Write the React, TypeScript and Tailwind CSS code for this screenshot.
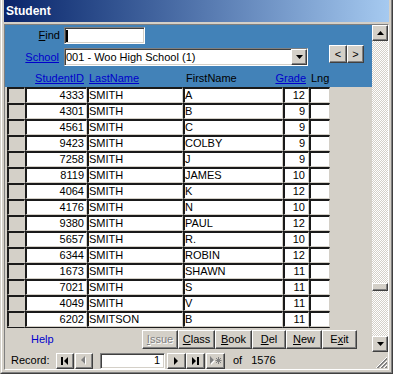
import type { ReactNode } from "react";

const rows: [string, string, string, string][] = [
  ["4333", "SMITH", "A", "12"],
  ["4301", "SMITH", "B", "9"],
  ["4561", "SMITH", "C", "9"],
  ["9423", "SMITH", "COLBY", "9"],
  ["7258", "SMITH", "J", "9"],
  ["8119", "SMITH", "JAMES", "10"],
  ["4064", "SMITH", "K", "12"],
  ["4176", "SMITH", "N", "10"],
  ["9380", "SMITH", "PAUL", "12"],
  ["5657", "SMITH", "R.", "10"],
  ["6344", "SMITH", "ROBIN", "12"],
  ["1673", "SMITH", "SHAWN", "11"],
  ["7021", "SMITH", "S", "11"],
  ["4049", "SMITH", "V", "11"],
  ["6202", "SMITSON", "B", "11"],
  ["", "", "", ""],
];

const sunken =
  "border border-t-[#808080] border-l-[#808080] border-r-white border-b-white shadow-[inset_1px_1px_0_#404040,inset_-1px_-1px_0_#d4d0c8]";
const raised =
  "bg-[#d4d0c8] border border-t-white border-l-white border-r-[#404040] border-b-[#404040] shadow-[inset_-1px_-1px_0_#808080]";
const cell =
  "h-[16px] shrink-0 border-t-2 border-l-2 border-r border-b border-t-[#1a1a1a] border-l-[#1a1a1a] border-r-[#d4d0c8] border-b-[#d4d0c8] flex items-center whitespace-nowrap overflow-hidden";
const link = "text-[#0000cc] underline underline-offset-1";

function Arrow({ dir }: { dir: "up" | "down" }) {
  return (
    <svg width="7" height="4" viewBox="0 0 7 4">
      <polygon points={dir === "up" ? "3.5,0 7,4 0,4" : "0,0 7,0 3.5,4"} fill="#000" />
    </svg>
  );
}

function FormButton({ w, children, disabled }: { w: string; children: ReactNode; disabled?: boolean }) {
  return (
    <div
      className={`${w} h-[19px] ${raised} flex items-center justify-center ${
        disabled ? "text-[#808080] [text-shadow:1px_1px_0_#fff]" : ""
      }`}
    >
      {children}
    </div>
  );
}

function NavButton({ w, children }: { w: string; children: ReactNode }) {
  return <div className={`${w} h-[16px] ${raised} flex items-center justify-center`}>{children}</div>;
}

export default function App() {
  return (
    <div className="w-[393px] h-[374px] bg-[#d4d0c8] border-l border-r border-b border-l-[#d4d0c8] border-r-[#404040] border-b-[#404040] overflow-hidden text-[11px] leading-none text-black [font-family:'Liberation_Sans',Arial,sans-serif]">
      <div className="h-full border-l border-r border-b border-l-white border-r-[#808080] border-b-[#808080] px-[2px] pb-[2px] flex flex-col">
        <div className="h-[22px] shrink-0 bg-linear-to-r from-[#0a246a] to-[#a6caf0] flex items-center pl-[2px] text-white font-bold text-[12px]">
          Student
        </div>
        <div className="h-[2px] shrink-0" />

        <div className="flex-1 flex flex-col border border-t-[#808080] border-l-[#808080] border-r-white border-b-white">
          <div className="h-[327px] flex">
            {/* form */}
            <div className="w-[367px] flex flex-col">
              <div className="h-[62px] shrink-0 bg-[#4282b8] flex flex-col pt-[2px]">
                <div className="flex h-[17px]">
                  <div className="w-[59px] pr-[4px] flex items-center justify-end">
                    <span>
                      <u>F</u>ind
                    </span>
                  </div>
                  <div className={`w-[81px] h-[17px] bg-white ${sunken} flex items-center pl-[1px]`}>
                    <div className="w-[2px] h-[12px] bg-black" />
                  </div>
                </div>
                <div className="flex h-[21px] mt-[1px]">
                  <div className="w-[59px] pr-[5px] pt-[3px] flex items-center justify-end">
                    <span className={link}>School</span>
                  </div>
                  <div className={`mt-[3px] w-[244px] h-[18px] bg-white ${sunken} flex items-center`}>
                    <span className="flex-1 pl-[1px]">001 - Woo High School (1)</span>
                    <div className={`w-[16px] h-full ${raised} flex items-center justify-center`}>
                      <Arrow dir="down" />
                    </div>
                  </div>
                  <div className="ml-[21px] flex h-[18px]">
                    <div className={`w-[18px] h-full ${raised} flex items-center justify-center`}>&lt;</div>
                    <div className={`w-[17px] h-full ${raised} flex items-center justify-center`}>&gt;</div>
                  </div>
                </div>
                <div className="flex h-[21px] items-center pt-[3px] pl-[2px] whitespace-nowrap">
                  <div className="w-[18px]" />
                  <div className="w-[62px] text-right pr-[3px]">
                    <span className={link}>StudentID</span>
                  </div>
                  <div className="w-[96px] pl-[2px]">
                    <span className={link}>LastName</span>
                  </div>
                  <div className="w-[92px] pl-[3px]">FirstName</div>
                  <div className="w-[34px] text-right pr-[3px]">
                    <span className={link}>Grade</span>
                  </div>
                  <div className="pl-[2px]">Lng</div>
                </div>
              </div>

              <div className="h-[241px] shrink-0 overflow-hidden flex flex-col">
                {rows.map(([id, last, first, grade], i) => (
                  <div key={i} className="flex pl-[2px] shrink-0">
                    <div className={`${cell} w-[18px] bg-[#d4d0c8]`} />
                    <div className={`${cell} w-[62px] bg-white justify-end pr-[2px]`}>{id}</div>
                    <div className={`${cell} w-[96px] bg-white`}>{last}</div>
                    <div className={`${cell} w-[100px] bg-white`}>{first}</div>
                    <div className={`${cell} w-[26px] bg-white justify-end pr-[3px]`}>{grade}</div>
                    <div className={`${cell} w-[21px] bg-white`} />
                  </div>
                ))}
              </div>

              <div className="flex-1 flex items-start pt-[2px]">
                <div className="w-[137px] h-[19px] pl-[26px] flex items-center text-[#0000cc]">Help</div>
                <FormButton w="w-[36px]" disabled>
                  <span>
                    <u>I</u>ssue
                  </span>
                </FormButton>
                <FormButton w="w-[37px]">
                  <span>
                    <u>C</u>lass
                  </span>
                </FormButton>
                <FormButton w="w-[37px]">
                  <span>
                    <u>B</u>ook
                  </span>
                </FormButton>
                <FormButton w="w-[34px]">
                  <span>
                    <u>D</u>el
                  </span>
                </FormButton>
                <FormButton w="w-[36px]">
                  <span>
                    <u>N</u>ew
                  </span>
                </FormButton>
                <FormButton w="w-[35px]">
                  <span>
                    E<u>x</u>it
                  </span>
                </FormButton>
              </div>
            </div>

            {/* scrollbar */}
            <div className="w-[16px] flex flex-col">
              <div className={`h-[16px] shrink-0 ${raised} flex items-center justify-center`}>
                <Arrow dir="up" />
              </div>
              <div className="flex-1 flex flex-col bg-[repeating-conic-gradient(#ffffff_0_25%,#d4d0c8_0_50%)] bg-[length:2px_2px]">
                <div className="h-[242px] shrink-0" />
                <div className={`h-[8px] shrink-0 ${raised}`} />
              </div>
              <div className={`h-[16px] shrink-0 ${raised} flex items-center justify-center`}>
                <Arrow dir="down" />
              </div>
            </div>
          </div>

          {/* record navigation */}
          <div className="flex-1 flex">
            <div className="w-[367px] flex items-center whitespace-nowrap">
              <span className="ml-[6px] w-[45px]">Record:</span>
              <NavButton w="w-[18px]">
                <svg width="8" height="8" viewBox="0 0 8 8">
                  <rect x="0" y="0" width="2" height="8" fill="#000" />
                  <polygon points="7,0 7,8 3,4" fill="#000" />
                </svg>
              </NavButton>
              <div className="ml-[1px]" />
              <NavButton w="w-[18px]">
                <svg width="6" height="9" viewBox="0 0 6 9">
                  <polygon points="5,1 5,9 1,5" fill="#fff" />
                  <polygon points="4,0 4,8 0,4" fill="#808080" />
                </svg>
              </NavButton>
              <div className={`ml-[7px] w-[65px] h-[16px] bg-white ${sunken} flex items-center justify-end pr-[4px]`}>1</div>
              <div className="ml-[2px]" />
              <NavButton w="w-[19px]">
                <svg width="5" height="8" viewBox="0 0 5 8">
                  <polygon points="0,0 0,8 4,4" fill="#000" />
                </svg>
              </NavButton>
              <NavButton w="w-[19px]">
                <svg width="8" height="8" viewBox="0 0 8 8">
                  <polygon points="0,0 0,8 4,4" fill="#000" />
                  <rect x="5" y="0" width="2" height="8" fill="#000" />
                </svg>
              </NavButton>
              <div className="ml-[1px]" />
              <NavButton w="w-[19px]">
                <svg width="12" height="9" viewBox="0 0 12 9">
                  <polygon points="1,1 1,9 5,5" fill="#fff" />
                  <polygon points="0,0 0,8 4,4" fill="#808080" />
                  <g stroke="#808080" strokeWidth="1">
                    <line x1="8.5" y1="1" x2="8.5" y2="8" />
                    <line x1="5.5" y1="4.5" x2="11.5" y2="4.5" />
                    <line x1="6" y1="2" x2="11" y2="7" />
                    <line x1="11" y1="2" x2="6" y2="7" />
                  </g>
                </svg>
              </NavButton>
              <span className="ml-[8px]">of</span>
              <span className="ml-[9px]">1576</span>
            </div>
            <div className="w-[16px] flex items-end justify-end">
              <svg width="13" height="13" viewBox="0 0 13 13">
                <g strokeWidth="1">
                  <line x1="12" y1="1" x2="1" y2="12" stroke="#fff" />
                  <line x1="12" y1="2" x2="2" y2="12" stroke="#808080" />
                  <line x1="12" y1="3" x2="3" y2="12" stroke="#808080" />
                  <line x1="12" y1="5" x2="5" y2="12" stroke="#fff" />
                  <line x1="12" y1="6" x2="6" y2="12" stroke="#808080" />
                  <line x1="12" y1="7" x2="7" y2="12" stroke="#808080" />
                  <line x1="12" y1="9" x2="9" y2="12" stroke="#fff" />
                  <line x1="12" y1="10" x2="10" y2="12" stroke="#808080" />
                  <line x1="12" y1="11" x2="11" y2="12" stroke="#808080" />
                </g>
              </svg>
            </div>
          </div>
        </div>
      </div>
    </div>
  );
}
